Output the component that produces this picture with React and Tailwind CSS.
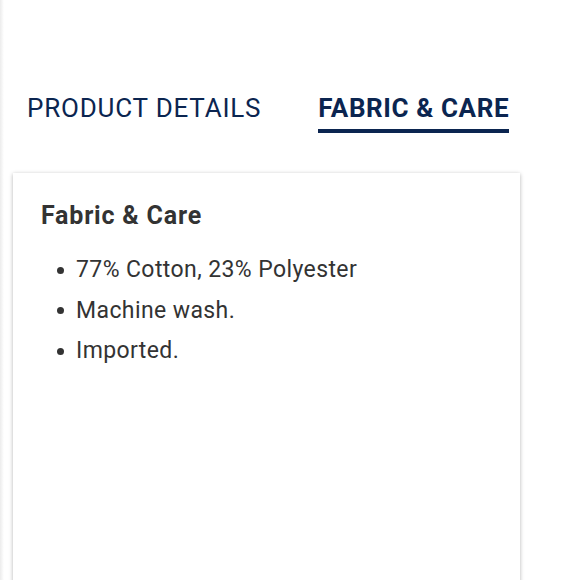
import React from 'react';

const items = ['77% Cotton, 23% Polyester', 'Machine wash.', 'Imported.'];

const App = () => {
  return (
    <div
      className="relative w-[580px] h-[580px] overflow-hidden bg-white"
      style={{ fontFamily: 'Roboto, "Liberation Sans", sans-serif' }}
    >
      <div className="absolute left-0 top-0 h-full w-[4px] bg-gradient-to-r from-[#ececec] to-white" />
      <div className="flex items-start pl-[27px] pt-[93px] text-[#0b2550]">
        <div className="text-[26px] leading-[30px] tracking-[0.8px]">PRODUCT DETAILS</div>
        <div className="ml-[57px] flex flex-col">
          <div className="text-[26px] leading-[30px] font-bold tracking-[0.6px]">FABRIC &amp; CARE</div>
          <div className="mt-[6px] h-[4px] bg-[#0b2550]" />
        </div>
      </div>
      <div className="ml-[13px] mt-[40px] w-[507px] h-[420px] bg-white shadow-[0_1px_4px_rgba(0,0,0,0.3)] px-[28px] pt-[28px] text-[#333]">
        <h3 className="text-[25px] leading-[30px] font-bold tracking-[0.8px]">Fabric &amp; Care</h3>
        <ul className="mt-[24px] flex flex-col gap-[10.5px] pl-[16px]">
          {items.map((item) => (
            <li key={item} className="flex items-center text-[23px] leading-[30px] tracking-[0.4px]">
              <span className="mr-[12px] w-[7px] h-[7px] rounded-full bg-[#333]" />
              {item}
            </li>
          ))}
        </ul>
      </div>
    </div>
  );
};

export default App;
